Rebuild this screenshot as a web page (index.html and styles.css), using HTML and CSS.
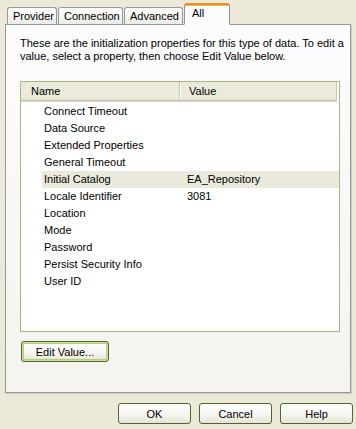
FILE: index.html
```html
<!DOCTYPE html>
<html lang="en">
<head>
    <meta charset="UTF-8">
    <meta name="viewport" content="width=device-width, initial-scale=1.0">
    <title>Data Link Properties</title>
    <link rel="stylesheet" href="styles.css">
</head>
<body>
    <div class="dialog">
        <div class="tabs">
            <div class="tab tab-provider">Provider</div>
            <div class="tab tab-connection">Connection</div>
            <div class="tab tab-advanced">Advanced</div>
            <div class="tab tab-all active">All</div>
        </div>

        <div class="page">
            <p class="intro">These are the initialization properties for this type of data. To edit a value, select a property, then choose Edit Value below.</p>

            <div class="listbox">
                <div class="list-header">
                    <div class="col col-name">Name</div>
                    <div class="col col-value">Value</div>
                </div>
                <div class="rows">
                    <div class="row"><span class="cell-name">Connect Timeout</span><span class="cell-value"></span></div>
                    <div class="row"><span class="cell-name">Data Source</span><span class="cell-value"></span></div>
                    <div class="row"><span class="cell-name">Extended Properties</span><span class="cell-value"></span></div>
                    <div class="row"><span class="cell-name">General Timeout</span><span class="cell-value"></span></div>
                    <div class="row selected"><span class="cell-name">Initial Catalog</span><span class="cell-value">EA_Repository</span></div>
                    <div class="row"><span class="cell-name">Locale Identifier</span><span class="cell-value">3081</span></div>
                    <div class="row"><span class="cell-name">Location</span><span class="cell-value"></span></div>
                    <div class="row"><span class="cell-name">Mode</span><span class="cell-value"></span></div>
                    <div class="row"><span class="cell-name">Password</span><span class="cell-value"></span></div>
                    <div class="row"><span class="cell-name">Persist Security Info</span><span class="cell-value"></span></div>
                    <div class="row"><span class="cell-name">User ID</span><span class="cell-value"></span></div>
                </div>
            </div>

            <button class="btn btn-focus edit-btn">Edit Value...</button>
        </div>

        <div class="footer">
            <button class="btn">OK</button>
            <button class="btn">Cancel</button>
            <button class="btn">Help</button>
        </div>
    </div>
</body>
</html>
```

FILE: styles.css
```css
body {
    margin: 0;
    background: #ece9d8;
    font-family: 'Liberation Sans', Arial, sans-serif;
    font-size: 11px;
    color: #000;
}

.dialog {
    width: 356px;
    height: 429px;
    padding: 3px 0 0 5px;
    box-sizing: border-box;
}

/* tab strip */
.tabs {
    display: flex;
    align-items: flex-end;
    height: 21px;
    padding-left: 2px;
}

.tab {
    height: 16px;
    line-height: 16px;
    margin-right: 1px;
    padding: 0 5px;
    border: 1px solid #919b9c;
    border-bottom: none;
    border-radius: 3px 3px 0 0;
    background: linear-gradient(#ffffff, #ecebe5);
    box-sizing: content-box;
    white-space: nowrap;
}

.tab-provider { width: 38px; }
.tab-connection { width: 53px; }
.tab-advanced { width: 47px; }

.tab.active {
    position: relative;
    z-index: 1;
    width: 33px;
    height: 19px;
    margin-bottom: -1px;
    padding: 0 4px 0 7px;
    line-height: 17px;
    background: #fcfcfe;
    border-top: 2px solid #e3912f;
    border-bottom: 1px solid #fcfcfe;
    box-shadow: inset 0 1px 0 #f8b848;
}

/* tab page */
.page {
    width: 346px;
    height: 369px;
    border: 1px solid #919b9c;
    background: linear-gradient(#fcfcfe, #f4f3ee);
    box-shadow: 1px 1px 0 #d0cdbd;
    padding: 12px 0 0 14px;
    box-sizing: border-box;
}

.intro {
    margin: 0 0 18px 0;
    width: 328px;
    line-height: 13px;
}

/* list view */
.listbox {
    width: 320px;
    height: 251px;
    border: 1px solid #a5b97e;
    background: #fff;
    box-sizing: border-box;
}

.list-header {
    display: flex;
    height: 17px;
    background: #ebeadb;
    border-bottom: 1px solid #e2decd;
    box-shadow: 0 1px 0 #cbc7b8, 0 2px 0 #d6d2c2;
    margin-right: 2px;
}

.col {
    line-height: 18px;
    box-sizing: border-box;
}

.col-name {
    width: 159px;
    padding-left: 10px;
    border-right: 1px solid #c7c5b2;
    box-shadow: 1px 0 0 #fff;
}

.col-value {
    flex: 1;
    padding-left: 9px;
    border-right: 1px solid #c7c5b2;
}

.rows {
    padding: 3px 0 0 21px;
}

.row {
    display: flex;
    height: 17px;
    line-height: 17px;
}

.row.selected {
    background: #ebe9db;
}

.cell-name {
    width: 143px;
    padding-left: 2px;
}

/* buttons */
.btn {
    width: 73px;
    height: 21px;
    padding: 0;
    border: 1px solid #4a6a2d;
    border-radius: 3px;
    background: linear-gradient(#ffffff 0%, #f5f4ee 60%, #e6e3d6 100%);
    font-family: 'Liberation Sans', Arial, sans-serif;
    font-size: 11px;
    color: #000;
}

.btn-focus {
    box-shadow: inset 0 0 0 1px #cfe0a3, inset 0 0 0 2px #b4cc80;
}

.edit-btn {
    width: 88px;
    margin: 9px 0 0 1px;
    padding-top: 1px;
}

.footer {
    display: flex;
    justify-content: flex-end;
    gap: 8px;
    width: 348px;
    margin-top: 10px;
}
```
